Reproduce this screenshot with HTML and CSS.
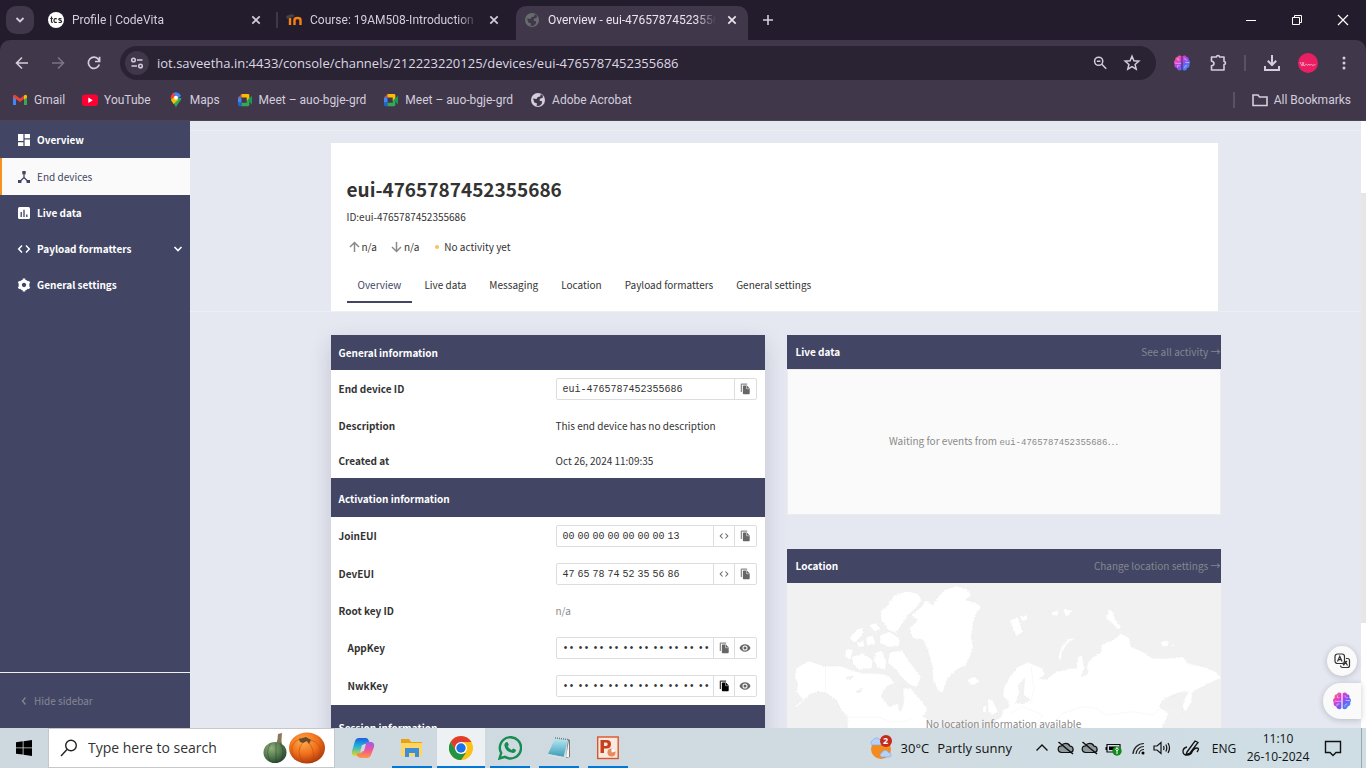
FILE: index.html
```
<!DOCTYPE html>
<html lang="en">
<head>
<meta charset="utf-8">
<title>Overview - eui-4765787452355686</title>
<link rel="stylesheet" href="styles.css">
</head>
<body>
<svg class="defs" aria-hidden="true">
  <defs>
    <linearGradient id="brain-fill" x1="0" y1="0" x2="1" y2="1">
      <stop offset="0" stop-color="#ff8a3c"/><stop offset=".3" stop-color="#e83bd0"/><stop offset=".6" stop-color="#7a55f5"/><stop offset="1" stop-color="#25a8ff"/>
    </linearGradient>
    <linearGradient id="copilot-a" x1="0" y1="0" x2="0" y2="1">
      <stop offset="0" stop-color="#1a5fe0"/><stop offset=".45" stop-color="#1fb4d8"/><stop offset="1" stop-color="#e8d820"/>
    </linearGradient>
    <linearGradient id="copilot-b" x1="0" y1="0" x2="0" y2="1">
      <stop offset="0" stop-color="#9a5cf0"/><stop offset=".5" stop-color="#f0559a"/><stop offset="1" stop-color="#ff9a3c"/>
    </linearGradient>
    <radialGradient id="pumpkin-fill" cx=".4" cy=".3" r=".8">
      <stop offset="0" stop-color="#ffac4a"/><stop offset=".5" stop-color="#f0701c"/><stop offset="1" stop-color="#9c2a08"/>
    </radialGradient>
    <radialGradient id="gourd-fill" cx=".35" cy=".3" r=".8">
      <stop offset="0" stop-color="#8fb07a"/><stop offset=".6" stop-color="#4c7048"/><stop offset="1" stop-color="#1f3a2a"/>
    </radialGradient>
    <linearGradient id="note-fill" x1="0" y1="0" x2="0" y2="1">
      <stop offset="0" stop-color="#b8e8f4"/><stop offset="1" stop-color="#3a9cb8"/>
    </linearGradient>
    <filter id="coast" x="-5%" y="-5%" width="110%" height="110%" color-interpolation-filters="sRGB">
      <feTurbulence type="fractalNoise" baseFrequency=".3" numOctaves="3" seed="4"/>
      <feDisplacementMap in="SourceGraphic" scale="9" xChannelSelector="R" yChannelSelector="G"/>
    </filter>
    <symbol id="brain" viewBox="0 0 20 20">
      <path fill="url(#brain-fill)" d="M9.400 2.500C8 .9 5.500 1.400 5 3.200 3 3.200 2 5 2.700 6.700.8 7.600.5 10 1.800 11.300 1 13.300 2.300 15.300 4.300 15.500 4.800 18.500 8 19 9.400 17.300ZM10.600 2.500C12 .9 14.500 1.400 15 3.200 17 3.200 18 5 17.300 6.700 19.200 7.600 19.500 10 18.200 11.300 19 13.300 17.700 15.300 15.700 15.500 15.200 18.500 12 19 10.600 17.300Z"/>
      <path fill="none" stroke="#fff" stroke-opacity=".65" stroke-width=".8" d="M2.500 10.300H9M5.500 4.500v2.300H7.500M5 15v-2h2.500M18 9.500h-4.500M13 4.500c.2 1.600 1 2.400 3 2.400M12.800 15.500c0-1.700.8-2.500 2.500-2.500"/>
    </symbol>
    <symbol id="globe" viewBox="0 0 16 16">
      <circle cx="8" cy="8" r="7" fill="currentColor"/>
      <path class="globe-land" d="M3 6.500 6.500 7l1.300-2 2.500-.5.300-2.200 2 1 .4 2.200L10 6.700l-.5 2 2.600.6-.4 2.700-2.700 2-2.500-.2.600-2.400-2.700-1z"/>
    </symbol>
    <symbol id="meet" viewBox="0 0 18 16">
      <path fill="#ea4335" d="m1 5 4-4v4z"/><path fill="#fbbc04" d="M5 1h7.500A1.500 1.500 0 0 1 14 2.500V8l-3 1V5H5z"/>
      <path fill="#4285f4" d="M1 5h4v6H1z"/><path fill="#1967d2" d="M1 11h4v4H2.500A1.500 1.500 0 0 1 1 13.500z"/>
      <path fill="#34a853" d="M5 11h6V8l3 1v4.500a1.500 1.500 0 0 1-1.500 1.500H5z"/><path fill="#0f9d58" d="m12 8 5-5v10z"/>
    </symbol>
    <symbol id="copy" viewBox="0 0 14 14">
      <path fill="currentColor" opacity=".75" d="M2 1.500A1 1 0 0 1 3 .5h6.500V2H3.500v8.500H2z"/>
      <path fill="currentColor" d="M4.500 4a1 1 0 0 1 1-1h3.700L12.500 6.300V12a1 1 0 0 1-1 1h-6a1 1 0 0 1-1-1z"/><path stroke="#fff" stroke-width=".6" fill="none" d="M8.800 3.200v3.500h3.600"/>
    </symbol>
    <symbol id="code" viewBox="0 0 14 14"><path fill="none" stroke="currentColor" stroke-width="1.500" d="M5 3.500 1.700 7 5 10.500M9 3.500 12.300 7 9 10.500"/></symbol>
    <symbol id="eye" viewBox="0 0 14 14"><path fill="currentColor" d="M7 2.700C3.900 2.700 1.500 4.700.6 7c.9 2.300 3.300 4.300 6.400 4.300s5.500-2 6.400-4.300C12.500 4.700 10.100 2.700 7 2.700z"/><circle cx="7" cy="7" r="2.400" fill="currentColor" stroke="#fff" stroke-width="1.200"/></symbol>
    <symbol id="cross" viewBox="0 0 16 16"><path fill="none" stroke="currentColor" stroke-width="1.700" d="m4.300 4.300 7.400 7.400m0-7.400-7.400 7.400"/></symbol>
    <symbol id="cloud-off" viewBox="0 0 18 16">
      <path fill="#8f989d" stroke="#111" stroke-width="1.200" d="M4.500 12.500a3.300 3.300 0 0 1 0-6.600A4.700 4.700 0 0 1 13 6.200a3.200 3.200 0 0 1 .7 6.300z"/><path stroke="#111" stroke-width="1.500" d="m1.500 2 14.500 12"/>
    </symbol>
  </defs>
</svg>

<header class="browser">
  <div class="tabstrip">
    <button class="tab-search" aria-label="Search tabs"><svg width="12" height="12" viewBox="0 0 12 12"><path fill="none" stroke="currentColor" stroke-width="1.800" d="m2.500 4 3.500 3.500L9.500 4"/></svg></button>
    <div class="tab">
      <svg class="favicon" viewBox="0 0 16 16"><circle cx="8" cy="8" r="8" fill="#fff"/><path fill="none" stroke="#222" stroke-width="1.200" d="M3.500 4.500v5q0 1 1.300 1M2.300 6.500h2.500M8.800 6.900Q6 6 6 8.500t2.800 1.800M13.500 6.800q-2.700-.8-2.700.5c0 1.500 2.800.8 2.800 2.200q-.3 1.500-3 .8"/></svg>
      <span class="tab-title">Profile | CodeVita</span>
      <button class="tab-close" aria-label="Close tab"><svg width="16" height="16"><use href="#cross"/></svg></button>
    </div>
    <div class="tab split">
      <svg class="favicon" viewBox="0 0 16 16"><path fill="none" stroke="#f98012" stroke-width="2.400" d="M4 13V6M8.500 13V8q0-2 3-2t3 2v5"/><path fill="#444" d="m0 4 6-2 3 2-5 2-3 1z"/></svg>
      <span class="tab-title">Course: 19AM508-Introduction</span>
      <button class="tab-close" aria-label="Close tab"><svg width="16" height="16"><use href="#cross"/></svg></button>
    </div>
    <div class="tab active">
      <svg class="favicon dim"><use href="#globe"/></svg>
      <span class="tab-title">Overview - eui-4765787452355686</span>
      <button class="tab-close" aria-label="Close tab"><svg width="16" height="16"><use href="#cross"/></svg></button>
    </div>
    <button class="new-tab" aria-label="New tab"><svg width="16" height="16" viewBox="0 0 16 16"><path stroke="currentColor" stroke-width="1.600" d="M8 3v10M3 8h10"/></svg></button>
    <div class="window-controls">
      <button aria-label="Minimize"><svg width="12" height="12" viewBox="0 0 12 12"><path stroke="currentColor" d="M1 6.500h10"/></svg></button>
      <button aria-label="Restore"><svg width="12" height="12" viewBox="0 0 12 12"><path fill="none" stroke="currentColor" d="M1.500 3.500h7v7h-7zM3.500 3.500v-2h7v7h-2"/></svg></button>
      <button aria-label="Close"><svg width="12" height="12" viewBox="0 0 12 12"><path stroke="currentColor" stroke-width="1.200" d="m1 1 10 10M11 1 1 11"/></svg></button>
    </div>
  </div>

  <div class="toolbar">
    <button class="nav" aria-label="Back"><svg width="16" height="16" viewBox="0 0 16 16"><path fill="none" stroke="currentColor" stroke-width="1.600" d="M14 8H3M8 2.500 2.500 8 8 13.500"/></svg></button>
    <button class="nav off" aria-label="Forward"><svg width="16" height="16" viewBox="0 0 16 16"><path fill="none" stroke="currentColor" stroke-width="1.600" d="M2 8h11M8 2.500 13.500 8 8 13.500"/></svg></button>
    <button class="nav" aria-label="Reload"><svg width="16" height="16" viewBox="0 0 16 16"><path fill="none" stroke="currentColor" stroke-width="1.700" d="M13.300 9.500A5.600 5.600 0 1 1 12.500 4.500L13.500 6M13.600 1.800v4.700H9"/></svg></button>
    <div class="omnibox">
      <button class="site-info" aria-label="Site information"><svg width="16" height="16" viewBox="0 0 16 16"><g fill="none" stroke="currentColor" stroke-width="1.500"><circle cx="4.500" cy="5" r="1.800"/><path d="M8 5h5.500M2.500 11H8"/><circle cx="11.500" cy="11" r="1.800"/></g></svg></button>
      <input class="url" aria-label="Address" value="iot.saveetha.in:4433/console/channels/212223220125/devices/eui-4765787452355686">
      <button class="omni-btn" aria-label="Zoom"><svg width="16" height="16" viewBox="0 0 18 18"><g fill="none" stroke="currentColor" stroke-width="1.700"><circle cx="7.500" cy="7" r="4.600"/><path d="M5.500 7h4M11 10.500l5 5"/></g></svg></button>
      <button class="omni-btn" aria-label="Bookmark"><svg width="18" height="18" viewBox="0 0 18 18"><path fill="none" stroke="currentColor" stroke-width="1.500" d="m9 2.300 1.900 4.500 4.900.4-3.700 3.200 1.100 4.700L9 12.600l-4.200 2.500 1.100-4.700-3.700-3.200 4.900-.4z"/></svg></button>
    </div>
    <button class="nav" aria-label="Brain extension"><svg width="18" height="18"><use href="#brain"/></svg></button>
    <button class="nav" aria-label="Extensions"><svg width="20" height="20" viewBox="0 0 20 20"><path fill="none" stroke="currentColor" stroke-width="1.600" stroke-linejoin="round" d="M3.500 4H8.500q0-1.500 1.500-1.500T11.500 4H16v4.500q1.500 0 1.500 1.500T16 11.500V17H3.500v-4.300Q6 12.500 6 10.500T3.500 8.300z"/></svg></button>
    <span class="rule"></span>
    <button class="nav" aria-label="Downloads"><svg width="18" height="18" viewBox="0 0 18 18"><path fill="none" stroke="currentColor" stroke-width="2" d="M9 1v9.500M4.800 6.800 9 11l4.200-4.200M2 12v4h14v-4"/></svg></button>
    <button class="nav" aria-label="Profile"><svg width="20" height="20" viewBox="0 0 20 20"><circle cx="10" cy="10" r="10" fill="#e91e63"/><path fill="none" stroke="#f9b8cc" stroke-width=".8" d="m2 9 2 4 2-4M4 9l2 4 2.500-2 1 1.500 1.500-1.500 1 1.500 1.500-1.500 1 1.500 3-1"/></svg></button>
    <button class="nav" aria-label="Menu"><svg width="16" height="16" viewBox="0 0 16 16"><g fill="currentColor"><circle cx="8" cy="3" r="1.500"/><circle cx="8" cy="8" r="1.500"/><circle cx="8" cy="13" r="1.500"/></g></svg></button>
  </div>

  <nav class="bookmarks" aria-label="Bookmarks">
    <a href="#"><svg width="16" height="16" viewBox="0 0 16 16"><path fill="#4285f4" d="M1 4l3 2.200V13H1z"/><path fill="#34a853" d="M12 6.200 15 4v9h-3z"/><path fill="#ea4335" d="M1 4Q2.500 2 4 3.500L8 6.600l4-3.100V7L8 10 1 5z"/><path fill="#fbbc04" d="M12 3.500Q14 2 15 4v1.500L12 7.500z"/></svg>Gmail</a>
    <a href="#"><svg width="16" height="16" viewBox="0 0 16 16"><rect y="2.500" width="16" height="11.500" rx="3" fill="#ff0033"/><path fill="#fff" d="m6.300 5.500 4.400 2.700-4.400 2.700z"/></svg>YouTube</a>
    <a href="#"><svg width="16" height="16" viewBox="-1 0 16 16"><path fill="#34a853" d="M7 16C6.500 12 2 10 1.700 6h10.600C12 10 7.500 12 7 16z"/><path fill="#4285f4" d="M3 2A5.300 5.300 0 0 1 12 4L4 10z"/><path fill="#ea4335" d="M1.700 6A5.300 5.300 0 0 1 5 1l2 4-3 3z"/><path fill="#fbbc04" d="m2 8 4-4 3 4-4.500 4z"/><circle cx="7" cy="5.700" r="2" fill="#fff"/></svg>Maps</a>
    <a href="#"><svg width="16" height="14"><use href="#meet"/></svg>Meet – auo-bgje-grd</a>
    <a href="#"><svg width="16" height="14"><use href="#meet"/></svg>Meet – auo-bgje-grd</a>
    <a href="#"><svg width="16" height="16"><use href="#globe"/></svg>Adobe Acrobat</a>
    <span class="rule push"></span>
    <a href="#"><svg width="16" height="16" viewBox="0 0 16 16"><path fill="none" stroke="currentColor" stroke-width="1.600" d="M1 3h5l1.500 2H15v8.500H1z"/></svg>All Bookmarks</a>
  </nav>
</header>

<div class="page">
  <aside class="sidebar">
    <nav aria-label="Device navigation">
      <a href="#"><svg width="14" height="14" viewBox="0 0 14 14"><path fill="currentColor" d="M1 1h5.400v7H1zM7.600 1H13v4.300H7.600zM1 9.200h5.400V13H1zM7.600 6.500H13V13H7.600z"/></svg>Overview</a>
      <a href="#" class="current" aria-current="page"><svg width="14" height="14" viewBox="0 0 14 14"><path fill="none" stroke="currentColor" stroke-width="1.300" d="M7 3v4.500L3 11.500M7 7.500l4 4"/><path fill="currentColor" d="M5.300 1h3.400v3.200H5.300zM1 10h3.400v3H1zM9.600 10H13v3H9.600z"/></svg>End devices</a>
      <a href="#"><svg width="14" height="14" viewBox="0 0 14 14"><rect x="1" y="1" width="12" height="12" rx="1.500" fill="currentColor"/><path stroke="#3f4462" stroke-width="1.300" d="M4.200 6v5M7 3.800V11M9.800 8.500V11"/></svg>Live data</a>
      <a href="#"><svg width="14" height="14"><use href="#code"/></svg>Payload formatters<svg class="caret" width="10" height="10" viewBox="0 0 10 10"><path fill="none" stroke="currentColor" stroke-width="1.600" d="M1.500 3 5 6.500 8.500 3"/></svg></a>
      <a href="#"><svg width="14" height="14" viewBox="0 0 14 14"><path fill="none" stroke="currentColor" stroke-width="3.200" d="M7 3.200a3.800 3.800 0 1 0 .01 0z"/><path stroke="currentColor" stroke-width="2.600" d="M7 .5v2M7 11.500v2M1.400 3.800l1.700 1M10.900 9.200l1.700 1M12.600 3.800l-1.700 1M3.100 9.200l-1.700 1"/></svg>General settings</a>
    </nav>
    <button class="hide"><svg width="10" height="10" viewBox="0 0 10 10"><path fill="none" stroke="currentColor" stroke-width="1.300" d="M6.500 1.500 3.500 5l3 3.500"/></svg>Hide sidebar</button>
  </aside>

  <main class="content">
    <div class="wrap">
      <section class="device">
        <h1>eui-4765787452355686</h1>
        <p class="device-id">ID:eui-4765787452355686</p>
        <div class="stats">
          <span class="stat"><svg width="14" height="14" viewBox="0 0 14 14"><path fill="none" stroke="currentColor" stroke-width="1.500" d="M7.500 12V2.500M3 7l4.500-4.500L12 7"/></svg>n/a</span>
          <span class="stat"><svg width="14" height="14" viewBox="0 0 14 14"><path fill="none" stroke="currentColor" stroke-width="1.500" d="M7.500 2v9.500M3 7l4.500 4.500L12 7"/></svg>n/a</span>
          <span class="stat activity"><i class="dot"></i>No activity yet</span>
        </div>
        <nav class="device-tabs" aria-label="Device sections">
          <a href="#" class="current">Overview</a><a href="#">Live data</a><a href="#">Messaging</a><a href="#">Location</a><a href="#">Payload formatters</a><a href="#">General settings</a>
        </nav>
      </section>

      <div class="columns">
        <section class="info">
          <h2 class="bar">General information</h2>
          <dl>
            <div class="row tall"><dt>End device ID</dt><dd><div class="field"><span class="value">eui-4765787452355686</span><button aria-label="Copy"><svg width="12" height="12"><use href="#copy"/></svg></button></div></dd></div>
            <div class="row"><dt>Description</dt><dd>This end device has no description</dd></div>
            <div class="row"><dt>Created at</dt><dd>Oct 26, 2024 11:09:35</dd></div>
          </dl>
          <h2 class="bar section">Activation information</h2>
          <dl>
            <div class="row tall"><dt>JoinEUI</dt><dd><div class="field"><span class="value"><b>00</b><b>00</b><b>00</b><b>00</b><b>00</b><b>00</b><b>00</b><b>13</b></span><button aria-label="Toggle format"><svg width="10" height="10"><use href="#code"/></svg></button><button aria-label="Copy"><svg width="12" height="12"><use href="#copy"/></svg></button></div></dd></div>
            <div class="row tall"><dt>DevEUI</dt><dd><div class="field"><span class="value"><b>47</b><b>65</b><b>78</b><b>74</b><b>52</b><b>35</b><b>56</b><b>86</b></span><button aria-label="Toggle format"><svg width="10" height="10"><use href="#code"/></svg></button><button aria-label="Copy"><svg width="12" height="12"><use href="#copy"/></svg></button></div></dd></div>
            <div class="row root"><dt>Root key ID</dt><dd class="muted">n/a</dd></div>
            <div class="row tall sub"><dt>AppKey</dt><dd><div class="field"><span class="value"><b>••</b><b>••</b><b>••</b><b>••</b><b>••</b><b>••</b><b>••</b><b>••</b><b>••</b><b>••</b></span><button aria-label="Copy"><svg width="12" height="12"><use href="#copy"/></svg></button><button aria-label="Show key"><svg width="12" height="12"><use href="#eye"/></svg></button></div></dd></div>
            <div class="row tall sub"><dt>NwkKey</dt><dd><div class="field"><span class="value"><b>••</b><b>••</b><b>••</b><b>••</b><b>••</b><b>••</b><b>••</b><b>••</b><b>••</b><b>••</b></span><button class="strong" aria-label="Copy"><svg width="12" height="12"><use href="#copy"/></svg></button><button aria-label="Show key"><svg width="12" height="12"><use href="#eye"/></svg></button></div></dd></div>
          </dl>
          <h2 class="bar section last">Session information</h2>
        </section>

        <div class="side">
          <section>
            <div class="bar linked"><h2>Live data</h2><a href="#">See all activity →</a></div>
            <div class="events"><p>Waiting for events from <code>eui-4765787452355686</code>…</p></div>
          </section>
          <section>
            <div class="bar linked"><h2>Location</h2><a href="#">Change location settings →</a></div>
            <div class="map">
              <svg viewBox="21 129 1305 840" preserveAspectRatio="xMidYMin slice" aria-hidden="true">
                <g fill="#fff" stroke="#ebebeb" stroke-width="1.500" filter="url(#coast)">
                  <path d="M500 148 530 138 560 145 576 165 560 180 590 188 606 200 590 222 582 250 575 290 582 320 572 350 560 375 530 390 505 415 490 460 475 450 460 420 458 380 445 330 430 300 400 295 388 265 415 240 395 225 425 200 440 180 460 195 480 165Z"/>
                  <path d="M320 200 345 165 380 153 415 160 428 180 410 205 385 225 370 250 350 280 325 270 305 240 302 215Z"/>
                  <path d="M302 285 330 275 360 295 360 318 330 322 300 310ZM210 295 232 268 252 262 250 285 225 308ZM258 292 280 285 290 312 262 318ZM232 308 252 300 255 320 235 322ZM268 255 290 248 305 268 285 275ZM288 335 308 332 320 365 318 390 295 385 282 360Z"/>
                  <path d="M200 325 222 330 212 362 197 350ZM215 350 250 340 280 358 278 385 240 390 220 372Z"/>
                  <path d="M330 335 368 332 390 365 425 410 412 445 385 430 360 405 345 385 325 370Z"/>
                  <path d="M50 385 85 362 135 378 185 378 215 390 250 400 300 400 330 408 345 430 320 440 305 470 330 500 355 490 362 517 372 490 370 445 395 445 410 465 425 480 445 510 430 530 455 545 470 620 400 760 330 840 260 760 205 620 203 530 185 510 170 480 140 460 115 455 90 465 60 495 25 515 70 480 50 455 55 430 45 410Z"/>
                  <path d="M670 450 690 410 715 380 745 366 790 385 797 405 780 415 800 418 830 395 870 385 890 385 895 350 908 345 915 385 905 410 925 400 920 375 940 350 965 335 965 315 1000 300 1025 280 1050 295 1055 320 1090 335 1120 355 1160 355 1210 350 1225 370 1270 380 1310 395 1326 415 1300 425 1270 440 1240 455 1235 490 1215 518 1208 495 1225 455 1190 460 1150 480 1140 500 1168 520 1140 580 1120 700 1000 830 900 760 640 640 640 545 665 530 670 510 690 500 685 480 670 470Z"/>
                  <path d="M625 475 640 480 655 515 640 525 625 515ZM610 500 622 495 620 518 610 518ZM562 420 580 410 600 418 595 432 575 436Z"/>
                  <path d="M690 240 715 230 722 250 730 275 710 290 700 265ZM720 228 745 225 742 242 725 242ZM895 290 870 305 850 330 845 362 835 355 845 320 865 298Z"/>
                  <path d="M988 205 1000 215 1008 240 1026 260 1015 268 995 248 978 235ZM1145 305 1165 300 1168 318 1148 320ZM1175 312 1192 316 1178 320ZM815 215 838 212 835 226 818 228ZM848 205 880 212 860 232ZM1295 360 1305 362 1300 366Z"/>
                  <path fill="#f1f1f1" d="M735 415 716 435 720 458 708 488 728 492 752 480 732 465Z"/>
                  <path fill="#f1f1f1" d="M200 412 222 408 212 420ZM230 455 250 443 240 458ZM350 432 378 438 362 444Z"/>
                </g>
                <path fill="none" stroke="#f4f4f4" stroke-width="2" d="M138 378v82M205 532h95l30 12h50l20-12M755 380l8 70-10 40M690 520l40-20 60 25-20 30 50-5 30-30 60-20 40 5 30 20 80-10 60 10 30-25 50 20 30 40"/>
              </svg>
              <p>No location information available</p>
            </div>
          </section>
        </div>
      </div>
    </div>
  </main>
  <div class="scroll-track"><div class="scroll-gap"></div></div>
  <button class="float translate" aria-label="Translate"><svg width="18" height="18" viewBox="0 0 18 18"><g fill="none" stroke="#333" stroke-width="1.200"><rect x="2" y="2" width="9.500" height="9.500" rx="2.500"/><path d="m4.500 9.500 2.300-5.300L9 9.500M5.400 7.600h2.700M13 6.500h1.500a2 2 0 0 1 2 2v5a2 2 0 0 1-2 2h-5a2 2 0 0 1-2-2M10.500 13.500l2-3.500 2 3.500M14 9l-4 4"/></g></svg></button>
  <button class="float assistant" aria-label="Assistant"><svg width="20" height="20"><use href="#brain"/></svg></button>
</div>

<footer class="taskbar">
  <button class="start" aria-label="Start"><svg width="16" height="16" viewBox="0 0 16 16"><path d="M0 2.300 6.700 1.300v6.200H0zM7.500 1.200 16 0v7.500H7.500zM0 8.300h6.700v6.300L0 13.700zM7.500 8.300H16V16l-8.500-1.200z"/></svg></button>
  <label class="search">
    <svg width="18" height="18" viewBox="0 0 18 18"><g fill="none" stroke="#222" stroke-width="1.400"><circle cx="11" cy="6.500" r="5.300"/><path d="M7 10.500 1 17"/></g></svg>
    <input type="text" placeholder="Type here to search" aria-label="Search">
    <svg width="64" height="34" viewBox="0 0 64 34"><path fill="#8b7558" d="M14 14q2-6 2-11l4-1q-1 7 0 12z"/><ellipse cx="13" cy="21.500" rx="11.500" ry="10.500" fill="url(#gourd-fill)"/><path fill="none" stroke="#1f3a2a" stroke-opacity=".4" d="M9 12q-7 9 0 19M14 12v20M18 12q6 9 0 19"/><ellipse cx="45" cy="17" rx="18" ry="15.500" fill="url(#pumpkin-fill)"/><path fill="none" stroke="#b34409" stroke-opacity=".5" d="M39 7q-15 6-6 22M42 10q-10 10 0 22M45 10q10 9 5 22M47 8q17 5 9 20"/><path fill="#6b4a2a" d="m37 8 7-2 5 3-2 4-2-3-4 2-3-1z"/></svg>
  </label>
  <nav class="apps" aria-label="Taskbar apps">
    <button class="app" aria-label="Copilot"><svg width="24" height="24" viewBox="0 0 24 24"><path fill="url(#copilot-a)" d="M8 2h7q2 0 3 3l.7 2.500H15q-2 0-2.700 2.500L10 18q-1 2-3 2H4q-4-.5-3-5L4 5q1-3 4-3z"/><path fill="url(#copilot-b)" d="M16 22H9q-2 0-3-3l-.3-1.500H9q2 0 2.700-2.500L14 8q1-2 3-2h3q4 .5 3 5l-3 8q-1 3-4 3z"/><path fill="#cfd9df" d="m11 9 4-1-2 7-4 1z"/></svg></button>
    <button class="app open" aria-label="File Explorer"><svg width="24" height="24" viewBox="0 0 24 24"><path fill="#e8a20c" d="M1 3h8l2 3h11v5H1z"/><path fill="#ffd565" d="M1 7h21v13H1z"/><path fill="#3c8fd4" d="M5 12h14v9h-4v-4H9v4H5z"/></svg></button>
    <button class="app open selected" aria-label="Chrome"><svg width="24" height="24" viewBox="0 0 24 24"><circle cx="12" cy="12" r="12" fill="#fbc116"/><path fill="#e33b2e" d="M12 0a12 12 0 0 1 10.400 6H12L7 15 1.600 6A12 12 0 0 1 12 0z"/><path fill="#229342" d="M1.600 6 7 15l5 3 5-1-5 7A12 12 0 0 1 1.600 6z"/><circle cx="12" cy="12" r="6" fill="#fff"/><circle cx="12" cy="12" r="4.700" fill="#1a73e8"/></svg></button>
    <button class="app open" aria-label="WhatsApp"><svg width="24" height="24" viewBox="0 0 24 24"><path fill="none" stroke="#178c53" stroke-width="2.400" d="M1.500 22.500 3.200 17A10.600 10.600 0 1 1 7 20.900z"/><path fill="#178c53" d="M8 6.300q1.300-1 2 .7l.7 1.600q.1.700-1 1.700 1.500 2.700 4 3.600l1.500-1.500q3 1.300 2.800 1.700-.5 2.900-3 2.900Q7.500 16 6.300 9q.2-1.700 1.700-2.700z"/></svg></button>
    <button class="app open" aria-label="Notepad"><svg width="24" height="24" viewBox="0 0 24 24"><path fill="#777" d="m21 3 2 1v17l-4 1z"/><path fill="#f5f5f5" d="m19 21 3-17v17z"/><path fill="url(#note-fill)" d="M8 2.500 21 4l-4.500 17L1 18z"/><path fill="#ddd" d="m1 18 16 3v2L1 20z"/><path stroke="#777" stroke-width="1.500" stroke-dasharray="1 1" d="m8 2 13 1.500"/></svg></button>
    <button class="app open" aria-label="PowerPoint"><svg width="24" height="24" viewBox="0 0 24 24"><rect x="1.700" y="1" width="20.500" height="21.500" fill="#fbe9df" stroke="#d9562b" stroke-width="1.400"/><circle cx="15.500" cy="16.500" r="4" fill="#e88a5f"/><path fill="#fff" d="M15.500 12.500v4l4-1q-.5-3-4-3z"/><path fill="#c8401b" fill-rule="evenodd" d="M4.500 4h6q4.500 0 4.500 4.200T10.500 12.500H8V17H4.500zM8 6.500V10h2q1.700 0 1.700-1.800T10 6.500z"/></svg></button>
  </nav>
  <div class="tray">
    <button class="weather"><svg width="24" height="24" viewBox="0 0 24 24"><circle cx="12" cy="13" r="10" fill="#f28c1e"/><path fill="#b6d0f7" stroke="#7fa6e0" stroke-width=".6" d="M3 9a3 3 0 0 1 1-5 4 4 0 0 1 7 0 2.700 2.700 0 0 1 0 5zM12 21a2.600 2.600 0 0 1 1-4.500 3.500 3.500 0 0 1 6.500 0A2.500 2.500 0 0 1 21 21z"/></svg><span class="badge">2</span><span>30°C</span><span>Partly sunny</span></button>
    <button aria-label="Hidden icons"><svg width="14" height="14" viewBox="0 0 14 14"><path fill="none" stroke="#111" stroke-width="1.400" d="M1.500 9.500 7 4l5.500 5.500"/></svg></button>
    <button aria-label="OneDrive"><svg width="18" height="16"><use href="#cloud-off"/></svg></button>
    <button aria-label="OneDrive work"><svg width="18" height="16"><use href="#cloud-off"/></svg></button>
    <button aria-label="Battery"><svg width="18" height="16" viewBox="0 0 18 16"><path fill="none" stroke="#111" stroke-width="1.200" d="M2 4.500h13V12H2z"/><path d="M4 6.500h7V10H4zM.5 7H2v3H.5z"/><circle cx="12" cy="11" r="4.700" fill="#138a1e"/><path fill="none" stroke="#fff" d="M12 14v-3m0 0q-2.500-1.500 0-3.500 2.500 2 0 3.500z"/></svg></button>
    <button aria-label="Network"><svg width="16" height="16" viewBox="0 0 16 16"><g fill="none" stroke="#222" stroke-width="1.200"><path d="M3 14A11 11 0 0 1 14 3.500M6 14a8 8 0 0 1 8-7.500M9 14a5 5 0 0 1 5-4.500"/></g><circle cx="13" cy="13" r="1.500"/></svg></button>
    <button aria-label="Volume"><svg width="18" height="16" viewBox="0 0 18 16"><path fill="none" stroke="#111" stroke-width="1.200" d="M1 6h3l4-3.500v11L4 10H1zM10.500 6q1 2 0 4M12.800 4.500q2 3.500 0 7M15 3q3 5 0 10"/></svg></button>
    <button aria-label="Pen" class="pen"><svg width="18" height="18" viewBox="0 0 18 18"><path fill="none" stroke="#111" stroke-width="1.300" d="m5 13 8-11 3 1.500L8 14l-4 1.500zM5 8q-4 1-4 4.500T5 16t5-3q2-4 5-4t0 4"/></svg></button>
    <button class="lang">ENG</button>
    <button class="clock"><span>11:10</span><span>26-10-2024</span></button>
    <button aria-label="Notifications" class="notice"><svg width="18" height="18" viewBox="0 0 18 18"><path fill="none" stroke="#111" stroke-width="1.400" d="M1.500 2.500h15v11H12l-3 3-3-3H1.500z"/></svg></button>
    <button class="desktop" aria-label="Show desktop"></button>
  </div>
</footer>
</body>
</html>
```
FILE: styles.css
```
:root {
  --navy: #424664;
  --chrome: #40374b;
  --chrome-dark: #231c2c;
  --chrome-text: #d3cedb;
  --page: #e5e8f1;
  --ui: "Open Sans", "Noto Sans", sans-serif;
  --compact: Roboto, "Open Sans", sans-serif;
  --text: "Noto Sans CJK SC", "Noto Sans", sans-serif;
  --mono: "Liberation Mono", monospace;
}

* { box-sizing: border-box; }

body {
  display: flex;
  flex-direction: column;
  height: 100vh;
  margin: 0;
  overflow: hidden;
  font-family: var(--ui);
  font-size: 12px;
}

button {
  display: flex;
  align-items: center;
  justify-content: center;
  padding: 0;
  border: 0;
  background: none;
  color: inherit;
  font: inherit;
}

a { color: inherit; text-decoration: none; }
svg { display: block; flex: none; }
h1, h2, p, dl, dd { margin: 0; }
.defs { position: absolute; width: 0; height: 0; }

/* Browser frame */
.browser { flex: none; background: var(--chrome-dark); color: var(--chrome-text); font-family: var(--compact); }
.tabstrip { display: flex; height: 40px; padding: 6px 0 0 6px; }
.tab-search { width: 28px; height: 28px; margin-right: 4px; border-radius: 10px; background: var(--chrome); }
.tab { display: flex; flex: 0 1 238px; align-items: center; height: 28px; min-width: 0; padding: 0 12px 0 10px; }
.favicon { width: 16px; height: 16px; margin-right: 8px; }
.dim { color: #666c6c; }
.globe-land { fill: var(--chrome); }
.tab-title {
  flex: 1;
  overflow: hidden;
  line-height: 18px;
  white-space: nowrap;
  mask-image: linear-gradient(to right, #000 88%, transparent);
}
.tab-close { width: 16px; height: 16px; margin-left: 8px; }
.tab.split { background: linear-gradient(var(--chrome), var(--chrome)) 0 50% / 2px 16px no-repeat; }
.tab.active { flex-basis: 232px; height: 34px; padding: 0 8px 6px; margin-left: 2px; border-radius: 10px 10px 0 0; background: var(--chrome); color: #eae6f0; }
.new-tab { width: 40px; height: 28px; }
.window-controls { display: flex; margin-left: auto; color: #fff; }
.window-controls button { width: 46px; height: 28px; }

.toolbar { display: flex; align-items: center; height: 46px; padding: 0 4px; border-radius: 10px 10px 0 0; background: var(--chrome); }
.nav { width: 36px; height: 34px; }
.nav.off { color: #7c7386; }
.omnibox { display: flex; flex: 1; align-items: center; height: 34px; margin: 0 8px; padding: 0 8px 0 5px; border-radius: 17px; background: #2a2333; }
.site-info { width: 24px; height: 24px; margin-right: 8px; border-radius: 50%; background: var(--chrome); }
.url { flex: 1; min-width: 0; padding: 0; border: 0; background: none; color: #dcd7e3; font: 13px/20px var(--ui); }
.omni-btn { width: 32px; height: 32px; }
.rule { width: 2px; height: 16px; margin: 0 8px; background: #5b5166; }

.bookmarks { display: flex; align-items: center; gap: 17px; height: 35px; padding: 0 15px 7px 12px; border-bottom: 1px solid #4a444f; background: var(--chrome); }
.bookmarks a { display: flex; align-items: center; gap: 6px; }
.push { margin: 0 0 0 auto; }

/* Console page */
.page { position: relative; display: flex; flex: 1; min-height: 0; background: var(--page); color: #333; font: 10px/16px var(--text); }
.sidebar { display: flex; flex: none; flex-direction: column; justify-content: space-between; width: 190px; padding-top: 1px; background: var(--navy); color: #fff; font-weight: 700; }
.sidebar a { display: flex; align-items: center; gap: 6px; height: 36px; padding: 0 7px 0 17px; }
.sidebar .current { height: 37px; padding-left: 15px; border-left: 2px solid #f7901e; background: #fafafa; color: var(--navy); font-weight: 400; }
.caret { margin-left: auto; }
.hide { justify-content: flex-start; gap: 5px; height: 56px; padding-left: 19px; border-top: 1px solid #f0f0f0; color: #858794; font-weight: 400; }

.content { flex: 1; min-width: 0; padding: 22px 20px 0; overflow: hidden; background: linear-gradient(#eeeff1, #eeeff1) 0 9px / 100% 1px no-repeat, linear-gradient(#eeeff1, #eeeff1) 0 190px / 100% 1px no-repeat; }
.wrap { max-width: 890px; margin: 0 auto; }
.device { margin-right: 3px; padding: 32px 16px 8px; background: #fff; }
.device h1 { font-size: 19px; line-height: 28px; }
.device-id { margin-top: 6px; }
.stats { display: flex; gap: 12px; margin-top: 14px; }
.stat { display: flex; align-items: center; gap: 1px; }
.stat svg { color: #8a8a8a; }
.stat.activity { gap: 5px; margin-left: 4px; }
.dot { width: 4px; height: 4px; border-radius: 50%; background: #fac25e; }
.device-tabs { display: flex; gap: 1px; margin-top: 18px; }
.device-tabs a { height: 30px; padding: 4px 11px 0; }
.device-tabs .current { border-bottom: 2px solid var(--navy); color: var(--navy); }

.columns { display: grid; grid-template-columns: 1fr 1fr; gap: 22px; margin-top: 24px; }
.info { background: #fff; box-shadow: 0 8px 20px rgba(40, 40, 60, .18); }
.bar { display: flex; align-items: center; height: 35px; padding: 0 8px; background: var(--navy); color: #fff; font-size: 10px; font-weight: 700; line-height: 16px; }
.section { height: 39px; padding-top: 3px; }
.last { padding-top: 6px; }
.row { display: grid; grid-template-columns: 1fr 1fr; align-items: center; height: 35px; }
.tall { height: 38px; }
.root { height: 36px; }
.row dt, .row dd { padding: 0 8px; }
.row dt { font-weight: 700; }
.row.sub dt { padding-left: 17px; }
.muted { color: #8a8a8a; }
.field { display: flex; height: 22px; border: 1px solid #ddd; border-radius: 2px; font-family: var(--mono); line-height: 22px; }
.value { display: flex; flex: 1; gap: 3px; min-width: 0; padding-left: 6px; overflow: hidden; white-space: nowrap; }
.value b { font-weight: 400; }
.field button { width: 21px; border-left: 1px solid #ddd; color: #666; }
.field button:last-child { width: 22px; }
.field .strong { color: #000; }

.side { display: flex; flex-direction: column; gap: 34px; min-width: 0; }
.linked { justify-content: space-between; height: 34px; padding: 0 0 0 9px; }
.linked h2 { font-size: 10px; }
.linked a { color: #84868f; font-weight: 400; }
.events { display: flex; align-items: center; justify-content: center; height: 146px; border: 1px solid #ececec; background: #fafafa; color: #8a8a8a; }
.events code { font-family: var(--mono); font-size: 9px; }
.map { position: relative; height: 280px; overflow: hidden; background: #f1f1f1; }
.map svg { width: 100%; height: 100%; }
.map p { position: absolute; inset: 133px 0 auto; color: #8a8a8a; text-align: center; }

.scroll-track { flex: none; width: 5px; padding-top: 72px; background: #fff; }
.scroll-gap { height: 430px; background: #e6e6e6; }
.float { position: absolute; background: #fafafa; box-shadow: 0 1px 6px rgba(0, 0, 0, .2); }
.translate { right: 9px; bottom: 52px; width: 30px; height: 30px; border-radius: 50%; }
.assistant { right: 5px; bottom: 9px; width: 38px; height: 36px; border-radius: 18px 0 0 18px; }

/* Desktop taskbar */
.taskbar { display: flex; flex: none; height: 40px; background: linear-gradient(90deg, #cdd8df, #d0dbe1 60%, #cfdee5); color: #111; font-size: 13px; }
.start { width: 48px; }
.search { display: flex; flex: 0 1 287px; align-items: center; min-width: 0; padding: 0 8px 0 11px; border: 1px solid #c4c8ca; background: #fff; }
.search input { flex: 1; width: 0; min-width: 0; margin-left: 10px; padding: 0; border: 0; font: 14px/20px var(--ui); }
.search input::placeholder { color: #333; opacity: 1; }
.apps { display: flex; gap: 1px; margin-left: 4px; }
.app { position: relative; width: 48px; }
.open::after { content: ""; position: absolute; inset: auto 4px 0; height: 2px; background: #0078d7; }
.selected { background: #edf1f3; }
.selected::after { inset: auto 0 0; }
.tray { display: flex; margin-left: auto; }
.tray button { width: 24px; }
.tray .weather { position: relative; gap: 8px; width: auto; margin-right: 18px; }
.badge { position: absolute; top: 7px; left: 11px; width: 12px; height: 12px; border-radius: 50%; background: #c42b1c; color: #fff; font-size: 9px; font-weight: 700; line-height: 12px; }
.tray .pen { width: 34px; }
.tray .lang { width: 32px; font-size: 12px; }
.tray .clock { flex-direction: column; width: 76px; font-size: 12px; line-height: 18px; }
.tray .notice { width: 34px; margin-right: 11px; }
.tray .desktop { width: 5px; border-left: 1px solid #9ba6ac; }
```
